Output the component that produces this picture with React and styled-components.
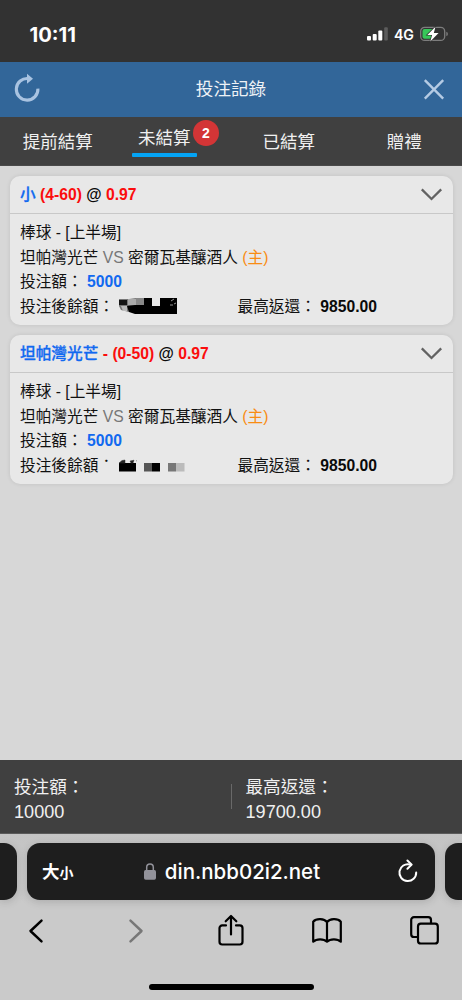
import React from "react";
import styled, { createGlobalStyle } from "styled-components";

const Global = createGlobalStyle`
  * { box-sizing: border-box; }
  body { margin: 0; background: #d7d7d7; }
  svg { display: block; flex: none; overflow: visible; }
`;

const Screen = styled.div`
  width: 462px;
  height: 1000px;
  overflow: hidden;
  display: flex;
  flex-direction: column;
  background: #d7d7d7;
  font-family: "Liberation Sans", "Noto Sans CJK TC", sans-serif;
  font-size: 15.7px;
  color: #111;
  white-space: nowrap;
`;

const StatusBar = styled.div`
  height: 62px;
  flex: none;
  display: flex;
  align-items: center;
  justify-content: space-between;
  padding: 6px 14px 0 29.5px;
  background: #323232;
  color: #fff;
  font-family: Inter, sans-serif;
`;

const Clock = styled.div`
  font-size: 20.2px;
  font-weight: 700;
`;

const Signals = styled.div`
  display: flex;
  align-items: center;
  gap: 6px;
`;

const Network = styled.span`
  font-size: 14.2px;
  font-weight: 600;
`;

const TitleBar = styled.header`
  height: 55px;
  flex: none;
  display: flex;
  align-items: center;
  justify-content: space-between;
  padding: 0 18px 0 15px;
  background: #326699;
  color: #eef2f6;
`;

const Title = styled.h1`
  margin: 0 2px 2px 0;
  font-size: 17.6px;
  font-weight: 400;
  line-height: 24px;
`;

const Tabs = styled.nav`
  height: 49px;
  flex: none;
  display: grid;
  grid-template-columns: repeat(4, 1fr);
  background: #404040;
  border-bottom: 1px solid #4a4a4a;
`;

const Tab = styled.div`
  display: flex;
  align-items: flex-start;
  justify-content: center;
  padding-top: ${(p) => (p.$active ? 7.5 : 12)}px;
  color: #f0f0f0;
  font-size: 17.5px;
  line-height: 26px;
`;

const TabLabel = styled.span`
  position: relative;
  margin-right: ${(p) => (p.$active ? 18 : 0)}px;

  &::after {
    content: "";
    display: ${(p) => (p.$active ? "block" : "none")};
    position: absolute;
    left: -6.5px;
    right: -6.5px;
    bottom: -6px;
    height: 4px;
    border-radius: 1px;
    background: #04a4f5;
  }
`;

const Badge = styled.span`
  position: absolute;
  left: 55px;
  top: -5px;
  width: 26px;
  height: 26px;
  border-radius: 50%;
  background: #d33536;
  color: #fff;
  font: 700 14px/26px "Liberation Sans", sans-serif;
  text-align: center;
`;

const Records = styled.main`
  flex: 1;
  display: flex;
  flex-direction: column;
  gap: 10px;
  padding: 10px 9.5px 0 10px;
`;

const Card = styled.article`
  height: 149px;
  border-radius: 10px;
  background: #e8e8e8;
  box-shadow: 0 0 4px rgba(0, 0, 0, 0.1);
`;

const CardHead = styled.div`
  height: 38px;
  display: flex;
  align-items: center;
  justify-content: space-between;
  padding: 1px 11px 0 10px;
  border-bottom: 1px solid #c8c8c8;
  font-weight: 700;
`;

const CardBody = styled.div`
  padding: 7px 10px 0;
`;

const Line = styled.div`
  height: 24.6px;
  line-height: 24.6px;
  display: flex;
  align-items: center;
  white-space: pre;
`;

const Half = styled.div`
  width: ${(p) => p.$width || "auto"};
  height: 24.6px;
  display: flex;
  align-items: center;
`;

const BalanceLabel = styled.span`
  width: 99px;
  height: 24.6px;
  display: flex;
`;

const tones = { blue: "#1169f0", red: "#fb0d0d", grey: "#777", orange: "#f98c12", ink: "#0a0a0a" };

const Tone = styled.span`
  color: ${(p) => tones[p.$tone]};
`;

const Pick = styled(Tone)`
  font-weight: 500;
  -webkit-text-stroke: 0.3px currentColor;
`;

const Amount = styled(Tone)`
  font-weight: 700;
`;

const Totals = styled.footer`
  height: 74px;
  flex: none;
  display: flex;
  align-items: center;
  background: #404040;
  border-bottom: 1px solid #5a5a5a;
  color: #f0f0f0;
  font-size: 17.6px;
  line-height: 25px;
`;

const Total = styled.div`
  flex: 1;
  padding: 6px 0 0 14px;
`;

const Sum = styled.div`
  font-size: 18.1px;
`;

const Divider = styled.div`
  width: 1px;
  height: 25px;
  background: #696969;
`;

const Browser = styled.div`
  height: 166px;
  flex: none;
  display: flex;
  flex-direction: column;
  align-items: center;
  padding-top: 9px;
  background: linear-gradient(#c4c4c4, #cacaca 70px);
`;

const AddressRow = styled.div`
  width: 462px;
  display: flex;
  justify-content: space-between;
`;

const NeighbourTab = styled.div`
  width: 17px;
  height: 57px;
  background: #1e1e1e;
  border-radius: ${(p) => (p.$side === "left" ? "0 13px 13px 0" : "13px 0 0 13px")};
  box-shadow: 0 2px 9px rgba(0, 0, 0, 0.15);
`;

const Address = styled.div`
  width: 408px;
  height: 57px;
  display: flex;
  align-items: center;
  justify-content: space-between;
  padding: 0 17px 0 15px;
  border-radius: 13px;
  background: #1e1e1e;
  box-shadow: 0 2px 9px rgba(0, 0, 0, 0.15);
  color: #fff;
`;

const TextSize = styled.div`
  width: 36px;
  font: 700 17.5px/24px "Noto Sans CJK TC", sans-serif;

  small { font-size: 14px; }
`;

const Site = styled.div`
  display: flex;
  align-items: center;
  gap: 9px;
  margin-right: 12px;
  font: 500 20.5px/26px Inter, sans-serif;
`;

const Toolbar = styled.div`
  width: 462px;
  height: 62px;
  display: flex;
  align-items: center;
  justify-content: space-between;
  padding: 0 22.5px 1px 20.5px;
`;

const Tool = styled.div`
  width: 30px;
  display: flex;
  justify-content: center;
  padding-left: ${(p) => p.$inset || 0}px;
`;

const HomeBar = styled.div`
  width: 165px;
  height: 6px;
  margin-top: 22px;
  border-radius: 3px;
  background: #000;
`;

const CellSignal = () => (
  <svg width="21" height="14" viewBox="0 0 21 14">
    <rect x="0" y="9" width="4" height="4.5" rx="1" fill="#fff" />
    <rect x="5.7" y="7" width="4" height="6.5" rx="1" fill="#fff" />
    <rect x="11.3" y="3.5" width="4" height="10" rx="1" fill="#fff" />
    <rect x="17.2" y="0.3" width="3.6" height="13.2" rx="1" fill="#5c5c5c" />
  </svg>
);

const Battery = () => (
  <svg width="28" height="16" viewBox="0 0 28 16">
    <rect x="0.7" y="1.4" width="24" height="13" rx="4" fill="none" stroke="#7d7d7d" strokeWidth="1.3" />
    <path d="M26.3 5.7q1.6.5 1.6 2.2t-1.6 2.2z" fill="#7d7d7d" />
    <path d="M4.5 3H14v9.8H4.5A2 2 0 0 1 2.5 11V5a2 2 0 0 1 2-2z" fill="#37c759" />
    <path d="M15.5.7 7.3 8.9h4.8l-1.8 6.5 8.3-8.3h-4.8z" fill="#fff" stroke="#323232" strokeWidth="1.4" paintOrder="stroke" />
  </svg>
);

const Refresh = () => (
  <svg width="25" height="29" viewBox="0 0 25 29">
    <path d="M13.4 3.6A10.8 10.8 0 1 0 22.9 13.6" fill="none" stroke="#a9c3e1" strokeWidth="3.1" />
    <path d="M12 -1.2v10l6-5z" fill="#a9c3e1" />
  </svg>
);

const Close = () => (
  <svg width="20" height="20" viewBox="0 0 20 20" stroke="#b5cbe4" strokeWidth="2.4">
    <path d="M.8.2 19.2 18.6M19.2.2.8 18.6" />
  </svg>
);

const Chevron = () => (
  <svg width="21" height="12" viewBox="0 0 21 12" fill="none" stroke="#626262" strokeWidth="2.3">
    <path d="M.8.4 10.5 10 20.2.4" />
  </svg>
);

const MaskLong = () => (
  <svg width="58" height="20" viewBox="0 0 58 20">
    <path d="M0 2h10L17 1h8v14H10L2 13 0 9z" fill="#777" />
    <path d="M17 1h8v7h-8z" fill="#888" />
    <path d="M9 2h8v6H9z" fill="#aaa" />
    <path d="M0 3h8v5H0z" fill="#151515" />
    <path d="M2 9h6v5H4z" fill="#bbb" />
    <path d="M25 1h8v8h8V1h17v16H16l-6-2-2-6 8-1h9z" fill="#000" />
    <path d="M52 4l3-2M51 8h3M55 7l2-1" stroke="#bbb" strokeWidth=".8" />
  </svg>
);

const MaskShort = () => (
  <svg width="66" height="16" viewBox="0 0 66 16">
    <path d="M0 5h17v8.5H0z" fill="#000" />
    <path d="M0 5 3 2.5 6 2v3zM11 3l4-.8-1 2.8h-2zM17 2.8h1" fill="#222" stroke="#333" strokeWidth=".5" />
    <path d="M25 5h8v8.5h-8z" fill="#555" />
    <path d="M33 5h8v8.5h-8z" fill="#000" />
    <path d="M49 5h8v8.5h-8z" fill="#777" />
    <path d="M57 5h8.5v8.5H57z" fill="#bbb" />
  </svg>
);

const ClippedColon = styled.span`
  width: 15.7px;
  height: 24.6px;
  clip-path: inset(0 0 12px 0);
`;

const Lock = () => (
  <svg width="12" height="17" viewBox="0 0 12 17">
    <path d="M2.7 8V4.4a3.3 3.3 0 0 1 6.6 0V8" fill="none" stroke="#92929a" strokeWidth="1.5" />
    <rect x="0" y="7" width="12" height="9.8" rx="1.7" fill="#92929a" />
  </svg>
);

const Reload = () => (
  <svg width="20" height="24" viewBox="0 0 20 24" fill="none" stroke="#fff" strokeWidth="2" strokeLinecap="round" strokeLinejoin="round">
    <path d="M12 4.5A8.4 8.4 0 1 0 18.2 12.4" />
    <path d="m9.4 .5 4.3 4.1-4.3 4.1" />
  </svg>
);

const Arrow = ({ forward }) => (
  <svg width="14" height="24" viewBox="0 0 14 24" fill="none" stroke={forward ? "#777" : "#000"} strokeWidth="2.5" strokeLinecap="round" strokeLinejoin="round">
    <path d={forward ? "m1.5 1.6 11 10.4-11 10.4" : "m12.5 1.6-11 10.4 11 10.4"} />
  </svg>
);

const Share = () => (
  <svg width="26" height="32" viewBox="0 0 26 32" fill="none" stroke="#000" strokeWidth="2.2" strokeLinecap="round" strokeLinejoin="round">
    <path d="M8 10.4H4.2a2.7 2.7 0 0 0-2.7 2.7v13.7a2.7 2.7 0 0 0 2.7 2.7h17.6a2.7 2.7 0 0 0 2.7-2.7V13.1a2.7 2.7 0 0 0-2.7-2.7H18" />
    <path d="M13 19.5V1.3M7.7 6.3 13 1l5.3 5.3" />
  </svg>
);

const Book = () => (
  <svg width="30" height="25" viewBox="0 0 30 25" fill="none" stroke="#000" strokeWidth="2.2" strokeLinejoin="round">
    <path d="M15 4.2C12.3.4 4.3.2 1.2 3.7v20c3.3-3.2 10.5-3.2 13.8 0 3.3-3.2 10.5-3.2 13.8 0v-20C25.7.2 17.7.4 15 4.2zM15 4.2v19.5" />
  </svg>
);

const Windows = () => (
  <svg width="29" height="29" viewBox="0 0 29 29" fill="none" stroke="#000" strokeWidth="2.2" strokeLinejoin="round">
    <path d="M7.5 21H4a2.8 2.8 0 0 1-2.8-2.8V4A2.8 2.8 0 0 1 4 1.2h14.2A2.8 2.8 0 0 1 21 4v3.5" />
    <rect x="8" y="7.7" width="19.8" height="19.8" rx="2.8" />
  </svg>
);

const bets = [
  { pick: "小", odds: " (4-60) ", masked: "long" },
  { pick: "坦帕灣光芒", odds: " - (0-50) ", masked: "short" },
];

function BetCard({ bet }) {
  const long = bet.masked === "long";
  return (
    <Card>
      <CardHead>
        <Line>
          <Pick $tone="blue">{bet.pick}</Pick>
          <Tone $tone="red">{bet.odds}</Tone>
          <Tone $tone="ink">@ </Tone>
          <Tone $tone="red">0.97</Tone>
        </Line>
        <Chevron />
      </CardHead>
      <CardBody>
        <Line>棒球 - [上半場]</Line>
        <Line>
          坦帕灣光芒<Tone $tone="grey"> VS </Tone>密爾瓦基釀酒人<Tone $tone="orange"> (主)</Tone>
        </Line>
        <Line>
          投注額： <Amount $tone="blue">5000</Amount>
        </Line>
        <Line>
          <Half $width="217.5px">
            <BalanceLabel>投注後餘額{long ? "：" : <ClippedColon>：</ClippedColon>}</BalanceLabel>
            {long ? <MaskLong /> : <MaskShort />}
          </Half>
          <Half>
            最高返還：<Amount $tone="ink"> 9850.00</Amount>
          </Half>
        </Line>
      </CardBody>
    </Card>
  );
}

export default function App() {
  return (
    <Screen lang="zh-TW">
      <Global />
      <StatusBar>
        <Clock>10:11</Clock>
        <Signals>
          <CellSignal />
          <Network>4G</Network>
          <Battery />
        </Signals>
      </StatusBar>
      <TitleBar>
        <Refresh />
        <Title>投注記錄</Title>
        <Close />
      </TitleBar>
      <Tabs>
        <Tab><TabLabel>提前結算</TabLabel></Tab>
        <Tab $active>
          <TabLabel $active>未結算<Badge>2</Badge></TabLabel>
        </Tab>
        <Tab><TabLabel>已結算</TabLabel></Tab>
        <Tab><TabLabel>贈禮</TabLabel></Tab>
      </Tabs>
      <Records>
        {bets.map((bet) => <BetCard key={bet.pick} bet={bet} />)}
      </Records>
      <Totals>
        <Total>投注額：<Sum>10000</Sum></Total>
        <Divider />
        <Total>最高返還：<Sum>19700.00</Sum></Total>
      </Totals>
      <Browser>
        <AddressRow>
          <NeighbourTab $side="left" />
          <Address>
            <TextSize>大<small>小</small></TextSize>
            <Site><Lock />din.nbb02i2.net</Site>
            <Reload />
          </Address>
          <NeighbourTab $side="right" />
        </AddressRow>
        <Toolbar>
          <Tool><Arrow /></Tool>
          <Tool $inset={6}><Arrow forward /></Tool>
          <Tool $inset={2}><Share /></Tool>
          <Tool><Book /></Tool>
          <Tool><Windows /></Tool>
        </Toolbar>
        <HomeBar />
      </Browser>
    </Screen>
  );
}
